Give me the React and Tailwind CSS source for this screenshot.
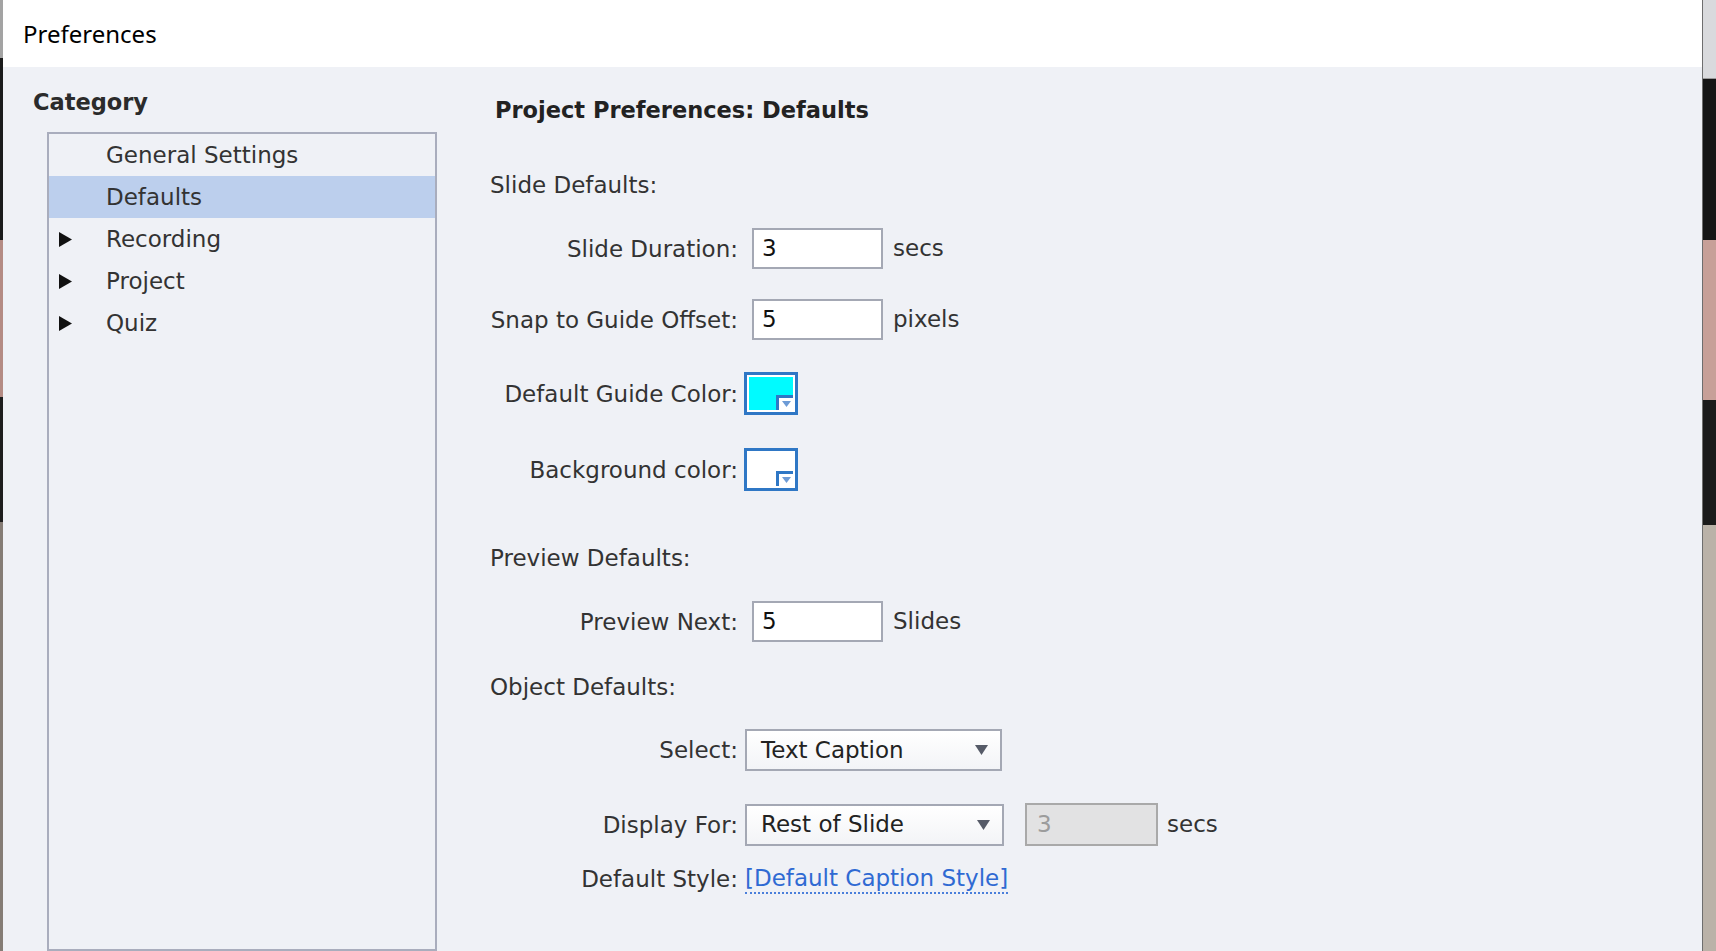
import React from "react";

const body = { fontFamily: '"DejaVu Sans", Verdana, sans-serif' };

const Arrow = () => (
  <svg width="13" height="15" viewBox="0 0 13 15" className="block">
    <polygon points="0,0 13,7.5 0,15" fill="#111" />
  </svg>
);

const DropArrow = () => (
  <svg width="13" height="10" viewBox="0 0 13 10" className="block">
    <polygon points="0,0 13,0 6.5,10" fill="#565b68" />
  </svg>
);

const categories = [
  { name: "General Settings", arrow: false },
  { name: "Defaults", arrow: false, active: true },
  { name: "Recording", arrow: true },
  { name: "Project", arrow: true },
  { name: "Quiz", arrow: true },
];

const Label = ({ children }) => (
  <div className="w-[248px] shrink-0 text-right text-[#333] leading-[30px]">{children}</div>
);

const TextBox = ({ value }) => (
  <div className="ml-[14px] w-[131px] h-[41px] border-2 border-[#a4a8b4] bg-white flex items-center pl-[8px] text-[#111]">
    {value}
  </div>
);

const Swatch = ({ fill }) => (
  <div className="ml-[6px] relative w-[54px] h-[43px] border-[3px] border-[#2f77c5] bg-white p-[2px]">
    <div className={`w-full h-full ${fill}`} />
    <div className="absolute right-[2px] bottom-[2px] w-[17px] h-[15px] bg-white border-l-[3px] border-t-[3px] border-[#2f77c5] flex items-center justify-center">
      <svg width="9" height="6" viewBox="0 0 9 6" className="block">
        <polygon points="0,0 9,0 4.5,6" fill="#6d9bd6" />
      </svg>
    </div>
  </div>
);

const Dropdown = ({ value, width }) => (
  <div
    className={`ml-[7px] ${width} h-[42px] border-2 border-[#a4a8b4] bg-gradient-to-b from-white to-[#f3f4f7] flex items-center justify-between pl-[14px] pr-[12px] text-[#222]`}
  >
    <span>{value}</span>
    <DropArrow />
  </div>
);

export default function App() {
  return (
    <div className="flex w-[1716px] h-[951px] overflow-hidden bg-[#1a1a1a]">
      {/* desktop peeking out on the left */}
      <div className="w-[3px] flex flex-col">
        <div className="h-[58px] bg-[#a3a3a3]" />
        <div className="h-[182px] bg-[#1b1b1b]" />
        <div className="h-[157px] bg-[#b48b84]" />
        <div className="h-[125px] bg-[#1d1d1d]" />
        <div className="flex-1 bg-[#857c75]" />
      </div>

      {/* dialog window */}
      <div className="w-[1700px] flex flex-col border-r border-[#6e6e6e]">
        <div
          className="h-[67px] bg-white flex items-center pl-[20px] text-[24px] text-black"
          style={{ fontFamily: '"Noto Sans", "Open Sans", sans-serif' }}
        >
          Preferences
        </div>

        <div className="flex-1 flex bg-[#eff1f6] text-[23px]" style={body}>
          {/* category pane */}
          <div className="w-[434px] shrink-0 flex flex-col pl-[30px] pt-[20px]">
            <div className="text-[22.5px] font-bold text-[#2b2b2b] leading-[30px]">Category</div>
            <div className="ml-[14px] mt-[15px] w-[390px] flex-1 border-2 border-[#a9adbd] flex flex-col">
              {categories.map((c) => (
                <div
                  key={c.name}
                  className={`h-[42px] flex items-center text-[#333] ${c.active ? "bg-[#bccfed]" : ""}`}
                >
                  <div className="w-[57px] pl-[10px]">{c.arrow && <Arrow />}</div>
                  <span>{c.name}</span>
                </div>
              ))}
            </div>
          </div>

          {/* settings pane */}
          <div className="flex-1 flex flex-col pl-[53px] pt-[28px]">
            <div className="ml-[5px] text-[22.5px] font-bold text-[#222] leading-[30px]">
              Project Preferences: Defaults
            </div>

            <div className="mt-[45px] text-[#333] leading-[30px]">Slide Defaults:</div>

            <div className="mt-[28px] flex items-center">
              <Label>Slide Duration:</Label>
              <TextBox value="3" />
              <span className="ml-[10px] text-[#333]">secs</span>
            </div>

            <div className="mt-[30px] flex items-center">
              <Label>Snap to Guide Offset:</Label>
              <TextBox value="5" />
              <span className="ml-[10px] text-[#333]">pixels</span>
            </div>

            <div className="mt-[32px] flex items-center">
              <Label>Default Guide Color:</Label>
              <Swatch fill="bg-[#00fbff]" />
            </div>

            <div className="mt-[33px] flex items-center">
              <Label>Background color:</Label>
              <Swatch fill="bg-white" />
            </div>

            <div className="mt-[52px] text-[#333] leading-[30px]">Preview Defaults:</div>

            <div className="mt-[28px] flex items-center">
              <Label>Preview Next:</Label>
              <TextBox value="5" />
              <span className="ml-[10px] text-[#333]">Slides</span>
            </div>

            <div className="mt-[30px] text-[#333] leading-[30px]">Object Defaults:</div>

            <div className="mt-[27px] flex items-center">
              <Label>Select:</Label>
              <Dropdown value="Text Caption" width="w-[257px]" />
            </div>

            <div className="mt-[32px] flex items-center">
              <Label>Display For:</Label>
              <Dropdown value="Rest of Slide" width="w-[259px]" />
              <div className="ml-[21px] w-[133px] h-[43px] border-2 border-[#a9a9a9] bg-[#e2e2e3] flex items-center pl-[10px] text-[#9c9c9c]">
                3
              </div>
              <span className="ml-[9px] text-[#333]">secs</span>
            </div>

            <div className="mt-[18px] flex items-center">
              <Label>Default Style:</Label>
              <span className="ml-[7px] text-[#2f6ad3] leading-[28px] border-b-2 border-dotted border-[#4a7fdb]">
                [Default Caption Style]
              </span>
            </div>
          </div>
        </div>
      </div>

      {/* desktop peeking out on the right */}
      <div className="flex-1 flex flex-col">
        <div className="h-[79px] bg-[#d9dadd] border-b border-[#9a9a9a]" />
        <div className="h-[161px] bg-[#161616]" />
        <div className="h-[160px] bg-[#c7a098]" />
        <div className="h-[125px] bg-[#1b1b1b]" />
        <div className="flex-1 bg-[#bab2a8]" />
      </div>
    </div>
  );
}
